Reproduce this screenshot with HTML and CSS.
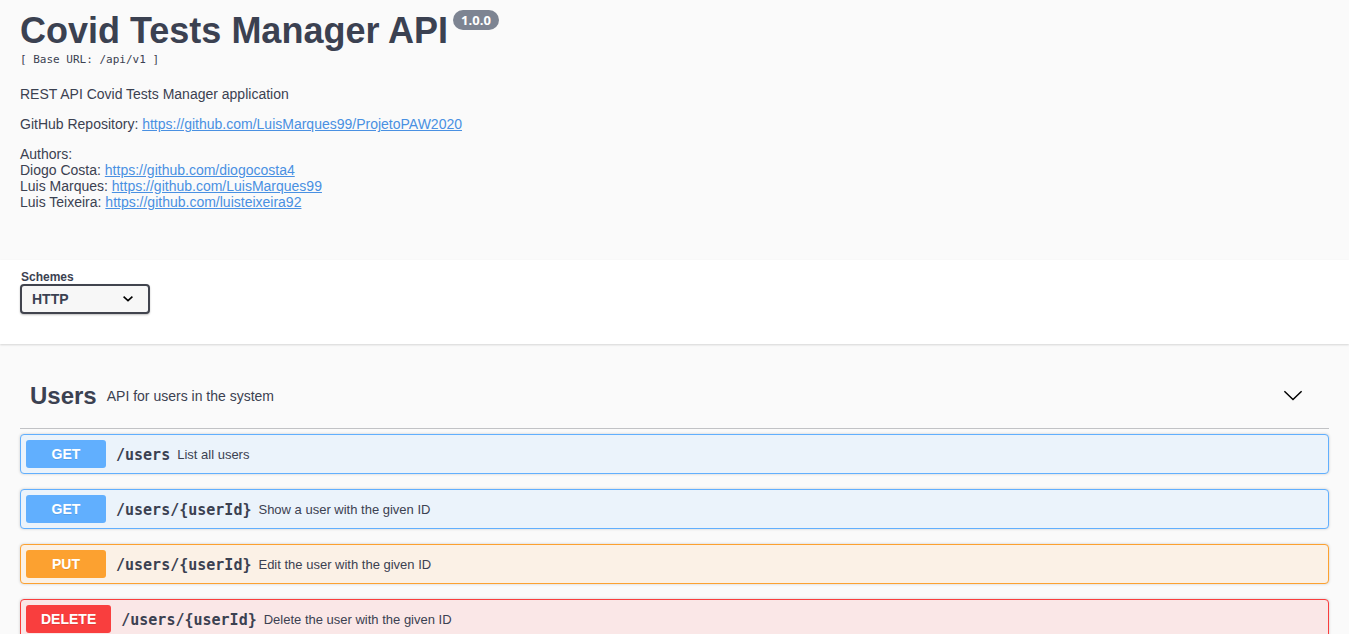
FILE: index.html
```
<!DOCTYPE html>
<html lang="en">
<head>
<meta charset="utf-8">
<title>Covid Tests Manager API</title>
<link rel="stylesheet" href="styles.css">
</head>
<body>
<header class="info">
  <div class="title-row">
    <h1 class="title">Covid Tests Manager API</h1>
    <span class="version">1.0.0</span>
  </div>
  <div class="base-url">[ Base URL: /api/v1 ]</div>
  <div class="description">
    <p>REST API Covid Tests Manager application</p>
    <p>GitHub Repository: <a href="https://github.com/LuisMarques99/ProjetoPAW2020">https://github.com/LuisMarques99/ProjetoPAW2020</a></p>
    <p>Authors:<br>
    Diogo Costa: <a href="https://github.com/diogocosta4">https://github.com/diogocosta4</a><br>
    Luis Marques: <a href="https://github.com/LuisMarques99">https://github.com/LuisMarques99</a><br>
    Luis Teixeira: <a href="https://github.com/luisteixeira92">https://github.com/luisteixeira92</a></p>
  </div>
</header>
<section class="schemes">
  <label class="schemes-label" for="schemes">Schemes</label>
  <div class="select-box">
    <select id="schemes" class="select">
      <option>HTTP</option>
    </select>
    <svg class="select-arrow" width="10" height="6" viewBox="0 0 10 6" aria-hidden="true"><path d="M0.6 0.7 5 4.7 9.4 0.7" fill="none" stroke="#000" stroke-width="1.6"/></svg>
  </div>
</section>
<main class="operations">
  <div class="tag">
    <h2 class="tag-name">Users</h2>
    <span class="tag-text">API for users in the system</span>
    <button class="tag-toggle" type="button" aria-label="Collapse Users">
      <svg width="20" height="12" viewBox="0 0 20 12" aria-hidden="true"><path d="M1.4 1.3 10 9.5 18.6 1.3" fill="none" stroke="#000" stroke-width="1.5"/></svg>
    </button>
  </div>
  <div class="list">
    <div class="op get"><button class="method" type="button">GET</button><span class="path">/users</span><span class="summary">List all users</span></div>
    <div class="op get"><button class="method" type="button">GET</button><span class="path">/users/{userId}</span><span class="summary">Show a user with the given ID</span></div>
    <div class="op put"><button class="method" type="button">PUT</button><span class="path">/users/{userId}</span><span class="summary">Edit the user with the given ID</span></div>
    <div class="op delete"><button class="method" type="button">DELETE</button><span class="path">/users/{userId}</span><span class="summary">Delete the user with the given ID</span></div>
  </div>
</main>
</body>
</html>
```
FILE: styles.css
```
* { box-sizing: border-box; }
html { overflow: hidden; }
body {
  margin: 0;
  background: #fafafa;
  color: #3b4151;
  font-family: "Liberation Sans", Arial, sans-serif;
  font-size: 14px;
}
.info { padding: 10px 20px 50px; }
.title-row { display: flex; align-items: flex-start; gap: 5px; }
.title { margin: 0; font-size: 36px; line-height: 42px; }
.version {
  padding: 0 8px;
  border-radius: 10px;
  background: #7d8492;
  color: #fff;
  font: bold 13px/20px "Open Sans", sans-serif;
}
.base-url { font: 11px/16px "DejaVu Sans Mono", monospace; }
.description { display: grid; gap: 14px; padding-top: 18px; line-height: 16px; }
.description p { margin: 0; }
.description a { color: #4990e2; }
.schemes {
  padding: 10px 20px 30px;
  background: #fff;
  box-shadow: 0 1px 2px rgba(0, 0, 0, .15);
}
.schemes-label { display: block; padding-left: 1px; font-size: 12px; font-weight: bold; line-height: 14px; }
.select-box { position: relative; width: 130px; }
.select {
  display: block;
  width: 100%;
  height: 30px;
  padding: 0 10px;
  appearance: none;
  border: 2px solid #41444e;
  border-radius: 4px;
  background: #f7f7f7;
  box-shadow: 0 1px 2px rgba(0, 0, 0, .25);
  color: #3b4151;
  font: bold 14px "Liberation Sans", Arial, sans-serif;
}
.select-arrow { position: absolute; top: 12px; right: 17px; pointer-events: none; }
.operations { padding: 20px 20px 0; }
.tag {
  display: flex;
  align-items: center;
  gap: 10px;
  height: 65px;
  padding: 0 26px 0 10px;
  border-bottom: 1px solid #c1c2c5;
}
.tag-name { margin: 0; font-size: 24px; line-height: 28px; }
.tag-toggle { display: flex; margin-left: auto; padding: 0; border: 0; background: none; }
.list { display: grid; gap: 15px; padding-top: 5px; }
.op {
  display: flex;
  align-items: center;
  padding: 5px;
  border: 1px solid;
  border-radius: 4px;
  box-shadow: 0 0 3px rgba(0, 0, 0, .19);
}
.method {
  min-width: 80px;
  height: 28px;
  padding: 0 15px;
  border: 0;
  border-radius: 3px;
  color: #fff;
  font: bold 14px "Liberation Sans", Arial, sans-serif;
  text-shadow: 0 1px 0 rgba(0, 0, 0, .1);
}
.path { padding: 2px 7px 0 10px; font: bold 15px/18px "DejaVu Sans Mono", monospace; }
.summary { font-size: 13px; }
.get { border-color: #61affe; background: #ebf3fb; }
.get .method { background: #61affe; }
.put { border-color: #fca130; background: #fbf1e6; }
.put .method { background: #fca130; }
.delete { border-color: #f93e3e; background: #fae7e7; }
.delete .method { background: #f93e3e; }
```
